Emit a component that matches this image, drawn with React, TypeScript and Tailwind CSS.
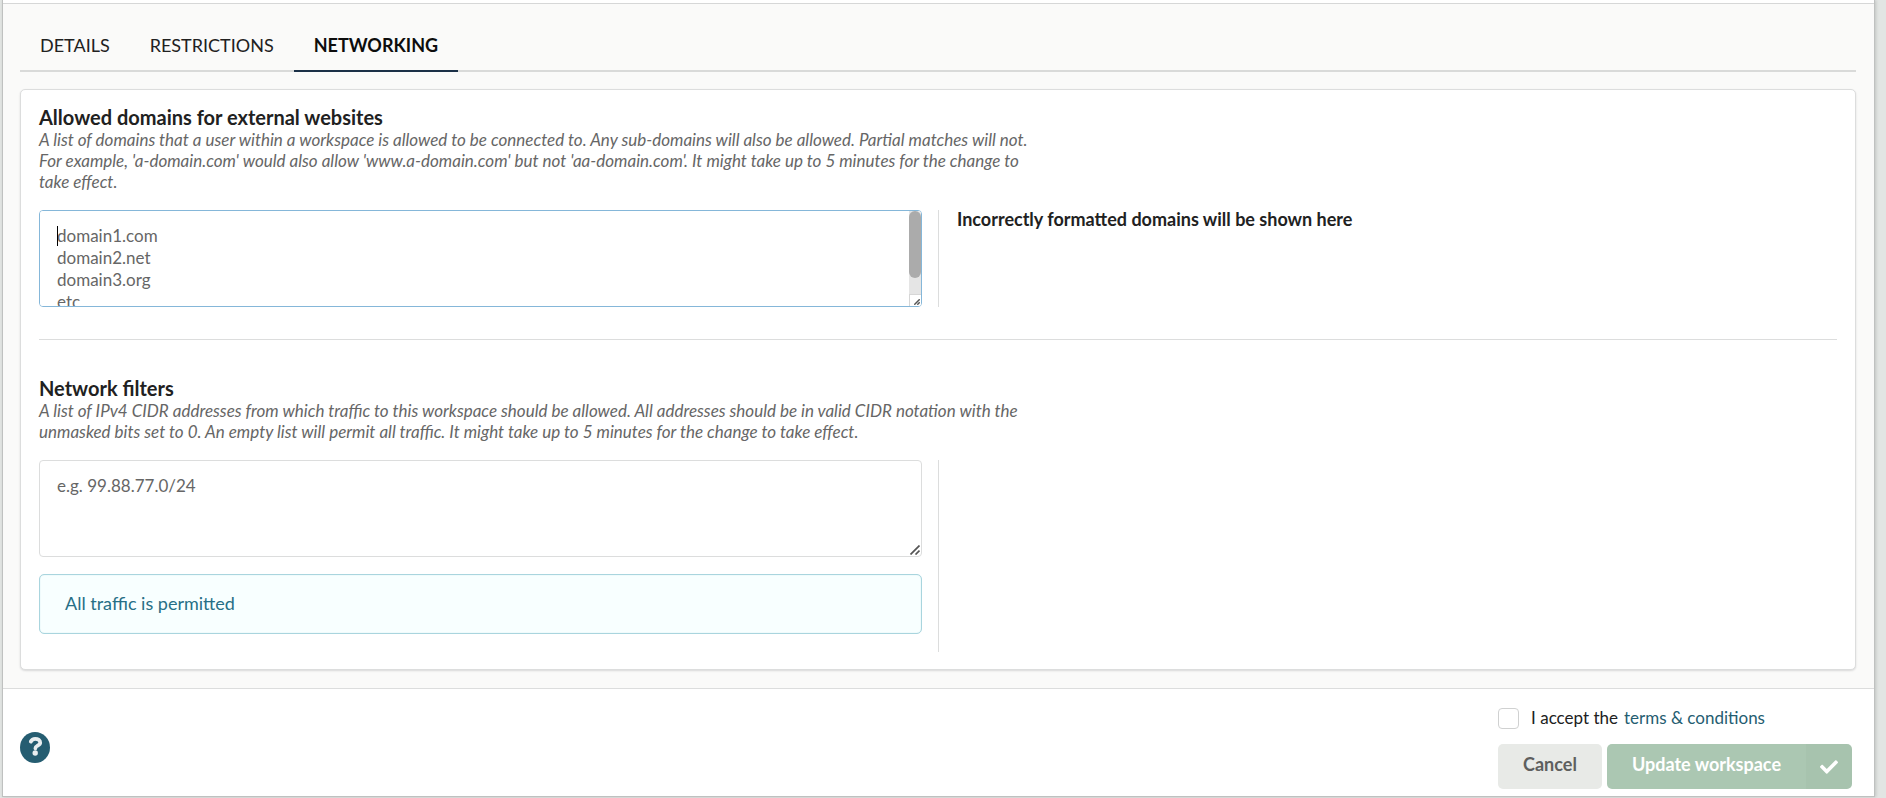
import { useState, type ReactNode } from 'react';
import clsx from 'clsx';
import { FaCheck } from 'react-icons/fa';

const TABS = ['DETAILS', 'RESTRICTIONS', 'NETWORKING'];

const DOMAINS_PLACEHOLDER = 'domain1.com\ndomain2.net\ndomain3.org\netc';

function TabMenu({ active, onChange }: { active: string; onChange: (tab: string) => void }) {
    return (
        <div role="tablist" className="flex border-b-2 border-[#d9dad9]">
            {TABS.map((tab) => (
                <button
                    key={tab}
                    type="button"
                    role="tab"
                    aria-selected={tab === active}
                    onClick={() => onChange(tab)}
                    className={clsx(
                        '-mb-[2px] border-b-2 px-5 py-4 leading-[18px]',
                        tab === active
                            ? 'border-[#1b3047] font-bold text-[#0d0d0d]'
                            : 'border-transparent text-[#212121]'
                    )}
                >
                    {tab}
                </button>
            ))}
        </div>
    );
}

function SectionHeader({ id, title, children }: { id: string; title: string; children: ReactNode }) {
    return (
        <div className="mb-[18px]">
            <h3 id={id} className="pb-[2px] text-[20px] leading-[19px] font-bold">{title}</h3>
            <p className="max-w-[1000px] text-[17px] leading-[21px] text-[#666] italic">{children}</p>
        </div>
    );
}

type ListInputProps = {
    labelledBy: string;
    placeholder: string;
    focused?: boolean;
};

function ListInput({ labelledBy, placeholder, focused }: ListInputProps) {
    const [value, setValue] = useState('');

    return (
        <div className="relative">
            <textarea
                aria-labelledby={labelledBy}
                placeholder={placeholder}
                value={value}
                onChange={(e) => setValue(e.target.value)}
                autoFocus={focused}
                className="block h-[97px] w-full resize-none rounded-[4px] border border-[#dcdddd] bg-white px-[17px] py-[14px] text-[17px] leading-[22px] outline-none [scrollbar-width:none] placeholder:text-[#666] focus:border-[#85b7d9]"
            />
            {/* caret and scrollbar */}
            {focused && (
                <>
                    {value === '' && <span className="pointer-events-none absolute top-4 left-[18px] h-5 w-px bg-black" />}
                    <span className="pointer-events-none absolute top-px right-px bottom-px w-3 overflow-hidden rounded-r-[3px] bg-[#e5e5e5]">
                        <span className="block h-[67px] rounded-[6px] bg-[#ababab]" />
                        <span className="absolute bottom-0 left-0 h-3 w-3 border-t border-l border-[#d6d6d6] bg-white" />
                    </span>
                </>
            )}
            {/* resize grip */}
            <svg
                viewBox="0 0 10 10"
                className={clsx('pointer-events-none absolute right-[2px] bottom-[2px]', focused ? 'h-[6px] w-[6px]' : 'h-[10px] w-[10px]')}
                fill="none"
                stroke="#555"
                strokeWidth={focused ? 2.4 : 1.7}
            >
                <path d="M0.5 9.5 9.5 0.5M5.5 9.5 9.5 5.5" />
            </svg>
        </div>
    );
}

export default function App() {
    const [activeTab, setActiveTab] = useState('NETWORKING');
    const [accepted, setAccepted] = useState(false);

    return (
        <div className="min-h-screen bg-[#e2e5e3] pr-[11px] pb-px pl-[2px] font-['Lato','Liberation_Sans',sans-serif] text-[18px] text-[#212121]">
            <div className="border-x border-b border-[#bfc1c0] bg-[#fafaf9] shadow-[1px_0_3px_rgba(0,0,0,0.15)]">
                <div className="h-1 border-b border-[#d6d7d7] bg-white" />

                <main className="pt-4 pr-[18px] pb-[18px] pl-[17px]">
                    <TabMenu active={activeTab} onChange={setActiveTab} />

                    <div className="mt-[17px] rounded-[5px] border border-[#dcdddd] bg-white p-[18px] pb-[17px] shadow-[0_1px_2px_rgba(34,36,38,0.15)]">
                        {/* Domains */}
                        <section>
                            <SectionHeader id="domains" title="Allowed domains for external websites">
                                A list of domains that a user within a workspace is allowed to be connected to. Any sub-domains will also be allowed. Partial matches will not. For example, 'a-domain.com' would also allow 'www.a-domain.com' but not 'aa-domain.com'. It might take up to 5 minutes for the change to take effect.
                            </SectionHeader>
                            <div className="grid grid-cols-2">
                                <div className="pr-4">
                                    <ListInput labelledBy="domains" placeholder={DOMAINS_PLACEHOLDER} focused />
                                </div>
                                <div className="border-l border-[#dcdddd] pl-[18px]">
                                    <h4 className="leading-[18px] font-bold">Incorrectly formatted domains will be shown here</h4>
                                </div>
                            </div>
                        </section>

                        <hr className="mt-8 mb-[39px] border-[#dcdddd]" />

                        {/* Filters */}
                        <section>
                            <SectionHeader id="filters" title="Network filters">
                                A list of IPv4 CIDR addresses from which traffic to this workspace should be allowed. All addresses should be in valid CIDR notation with the unmasked bits set to 0. An empty list will permit all traffic. It might take up to 5 minutes for the change to take effect.
                            </SectionHeader>
                            <div className="grid grid-cols-2">
                                <div className="pr-4 pb-[18px]">
                                    <ListInput labelledBy="filters" placeholder="e.g. 99.88.77.0/24" />
                                    <div className="mt-[17px] rounded-[5px] border border-[#a9d5de] bg-[#f8ffff] px-[25px] pt-[17px] pb-[19px] leading-[22px] text-[#276f86] shadow-[inset_0_0_1px_#a9d5de]">
                                        All traffic is permitted
                                    </div>
                                </div>
                                <div className="border-l border-[#dcdddd]" />
                            </div>
                        </section>
                    </div>
                </main>

                <footer className="flex items-center justify-between border-t border-[#dcdddd] bg-white pt-[17px] pr-[22px] pb-[7px] pl-[17px]">
                    <button type="button" aria-label="Help" className="rounded-full">
                        <svg viewBox="0 0 30 31" className="h-[31px] w-[30px]" fill="none">
                            <ellipse cx="15" cy="15.5" rx="15" ry="15.5" fill="#255d71" />
                            <path d="M10.8 9.6C11.8 7.4 13.3 6.8 15.2 6.8c2.8 0 5 1.5 5 3.9 0 3-4.8 3-4.8 5.6" stroke="#e9eef0" strokeWidth="3.8" strokeLinecap="round" />
                            <circle cx="15.2" cy="21" r="2.7" fill="#e9eef0" />
                        </svg>
                    </button>

                    <div>
                        <div className="flex items-center text-[17px] leading-6">
                            <input
                                id="terms"
                                type="checkbox"
                                checked={accepted}
                                onChange={(e) => setAccepted(e.target.checked)}
                                className="h-[21px] w-[21px] appearance-none rounded-[4px] border border-[#d0d1d1] bg-white checked:bg-[#255d71]"
                            />
                            <label htmlFor="terms" className="ml-3">I accept the</label>
                            <a href="#terms" className="ml-[6px] text-[#255d71]">terms &amp; conditions</a>
                        </div>
                        <div className="mt-[14px] flex gap-[5px] font-bold">
                            <button type="button" className="h-[45px] rounded-[5px] bg-[#e8eae7] px-[25px] pb-1 text-[#5e5f5e]">
                                Cancel
                            </button>
                            <button type="button" disabled={!accepted} className="flex h-[45px] overflow-hidden rounded-[5px] bg-[#21733f] text-white disabled:bg-[#abc7b2]">
                                <span className="self-center px-[25px] pb-1">Update workspace</span>
                                <span className="flex w-[46px] items-center justify-center self-stretch bg-black/2">
                                    <FaCheck size={18} />
                                </span>
                            </button>
                        </div>
                    </div>
                </footer>
            </div>
        </div>
    );
}
